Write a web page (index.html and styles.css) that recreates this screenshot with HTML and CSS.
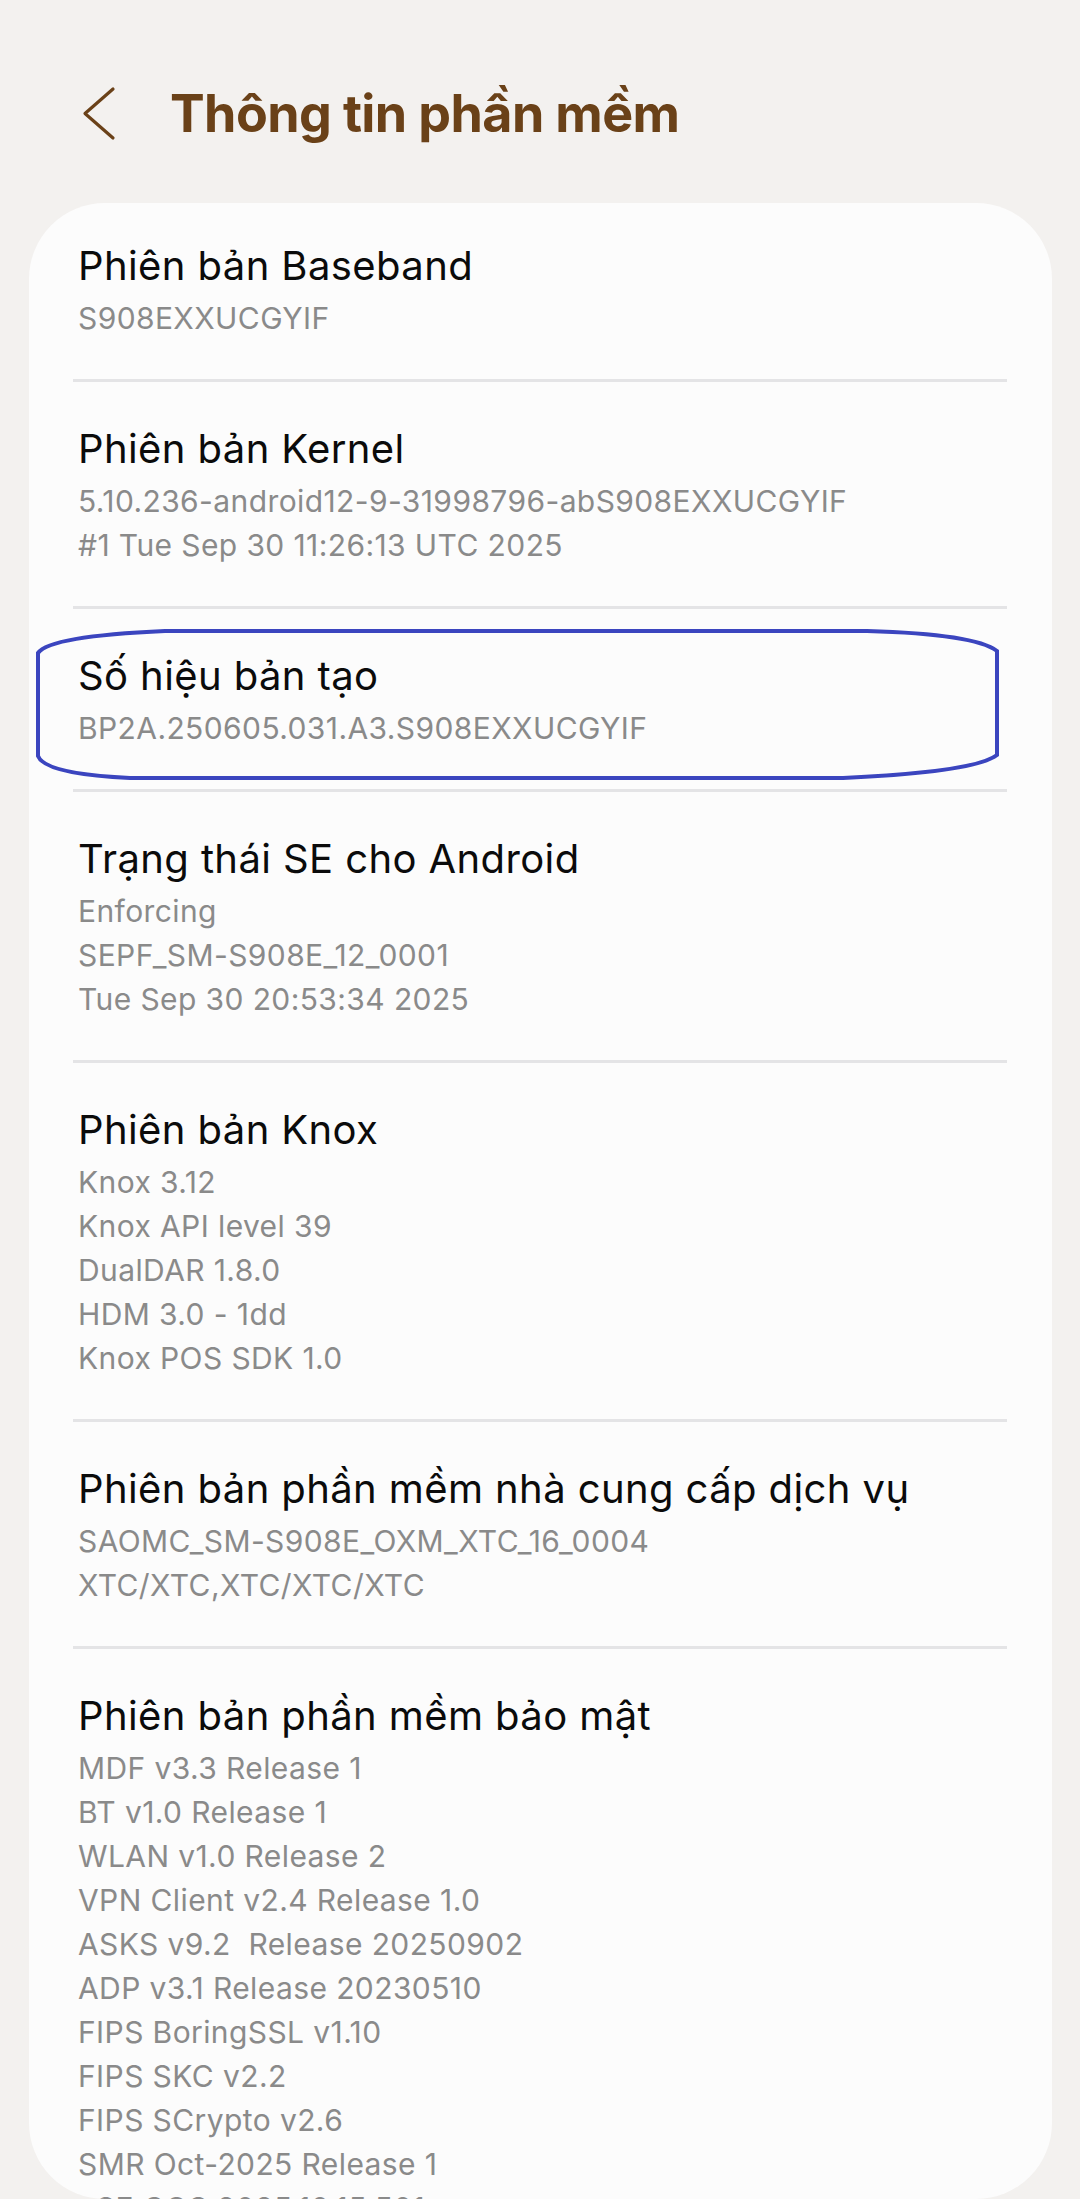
FILE: index.html
```html
<!DOCTYPE html>
<html lang="vi">
<head>
<meta charset="utf-8">
<title>Thông tin phần mềm</title>
<link rel="stylesheet" href="styles.css">
</head>
<body>
<div class="screen">
  <header class="appbar">
    <svg class="back" viewBox="0 0 36 56" width="36" height="56" aria-hidden="true">
      <polyline points="32,3 4,27.5 32,52" fill="none" stroke="#6a4118" stroke-width="3.2" stroke-linecap="round" stroke-linejoin="round"/>
    </svg>
    <h1 class="title">Thông tin phần mềm</h1>
  </header>

  <main class="card">
    <section class="item">
      <div class="item-title">Phiên bản Baseband</div>
      <div class="item-sub">S908EXXUCGYIF</div>
    </section>
    <section class="item">
      <div class="item-title">Phiên bản Kernel</div>
      <div class="item-sub">5.10.236-android12-9-31998796-abS908EXXUCGYIF</div>
      <div class="item-sub">#1 Tue Sep 30 11:26:13 UTC 2025</div>
    </section>
    <section class="item marked">
      <svg class="oval" viewBox="0 0 966 154" width="966" height="154" aria-hidden="true">
        <path d="M2,25 Q14,8 129,3 L831,3 Q939,6 961,23 L961,127 Q939,144 807,150 L94,150 Q9,146 2,128 Z" fill="none" stroke="#3b45bf" stroke-width="4"/>
      </svg>
      <div class="item-title">Số hiệu bản tạo</div>
      <div class="item-sub">BP2A.250605.031.A3.S908EXXUCGYIF</div>
    </section>
    <section class="item">
      <div class="item-title">Trạng thái SE cho Android</div>
      <div class="item-sub">Enforcing</div>
      <div class="item-sub">SEPF_SM-S908E_12_0001</div>
      <div class="item-sub">Tue Sep 30 20:53:34 2025</div>
    </section>
    <section class="item">
      <div class="item-title">Phiên bản Knox</div>
      <div class="item-sub">Knox 3.12</div>
      <div class="item-sub">Knox API level 39</div>
      <div class="item-sub">DualDAR 1.8.0</div>
      <div class="item-sub">HDM 3.0 - 1dd</div>
      <div class="item-sub">Knox POS SDK 1.0</div>
    </section>
    <section class="item">
      <div class="item-title">Phiên bản phần mềm nhà cung cấp dịch vụ</div>
      <div class="item-sub">SAOMC_SM-S908E_OXM_XTC_16_0004</div>
      <div class="item-sub">XTC/XTC,XTC/XTC/XTC</div>
    </section>
    <section class="item">
      <div class="item-title">Phiên bản phần mềm bảo mật</div>
      <div class="item-sub">MDF v3.3 Release 1</div>
      <div class="item-sub">BT v1.0 Release 1</div>
      <div class="item-sub">WLAN v1.0 Release 2</div>
      <div class="item-sub">VPN Client v2.4 Release 1.0</div>
      <div class="item-sub">ASKS v9.2&nbsp; Release 20250902</div>
      <div class="item-sub">ADP v3.1 Release 20230510</div>
      <div class="item-sub">FIPS BoringSSL v1.10</div>
      <div class="item-sub">FIPS SKC v2.2</div>
      <div class="item-sub">FIPS SCrypto v2.6</div>
      <div class="item-sub">SMR Oct-2025 Release 1</div>
      <div class="item-sub">eSE COS 2025.10.15.501</div>
    </section>
  </main>
</div>
</body>
</html>
```

FILE: styles.css
```css
* { box-sizing: border-box; }

html, body {
  margin: 0;
  padding: 0;
  background: #f3f1ef;
}

body {
  font-family: Inter, "Noto Sans", Roboto, sans-serif;
  width: 1080px;
  height: 2199px;
  overflow: hidden;
}

.screen {
  display: flex;
  flex-direction: column;
  padding: 0 28px 0 29px;
}

.appbar {
  display: flex;
  align-items: center;
  padding-top: 82px;
  padding-left: 52px;
  gap: 53px;
}

.back {
  flex: none;
  display: block;
}

.title {
  margin: 0;
  font-size: 52px;
  line-height: 64px;
  font-weight: 700;
  color: #6a4118;
  letter-spacing: -0.6px;
}

.card {
  margin-top: 57px;
  background: #fcfcfc;
  border-radius: 76px;
  height: 1996px;
  overflow: hidden;
  display: flex;
  flex-direction: column;
}

.item {
  position: relative;
  margin: 0 45px 0 44px;
  padding: 37px 5px 39px;
  border-bottom: 3px solid #e4e4e6;
}

.item:first-child {
  padding-top: 33px;
}

.item:last-child {
  border-bottom: none;
}

.item-title {
  font-size: 40px;
  line-height: 60px;
  color: #0b0b0b;
  font-weight: 400;
  letter-spacing: 0.4px;
}

.item-sub {
  font-size: 30px;
  line-height: 44px;
  color: #8a8a8a;
  white-space: pre;
  letter-spacing: 0.4px;
}

.oval {
  position: absolute;
  left: -37px;
  top: 19px;
  display: block;
  overflow: visible;
}
```
